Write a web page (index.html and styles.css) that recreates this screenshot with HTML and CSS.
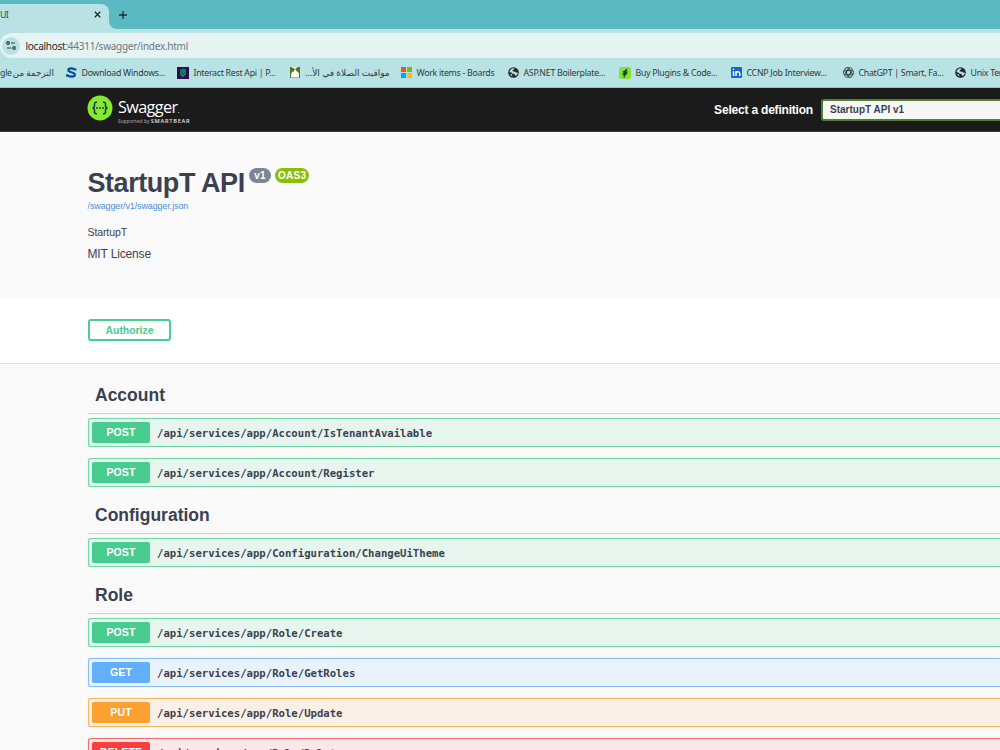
FILE: index.html
```html
<!DOCTYPE html>
<html lang="en">
<head>
    <meta charset="utf-8">
    <title>Swagger UI</title>
    <link rel="stylesheet" href="styles.css">
</head>
<body>
    <!-- browser -->
    <div class="tab-strip">
        <div class="tab"><span>UI</span>
            <svg class="tab-close" width="7" height="7" viewBox="0 0 7 7"><path d="M.8.8l5.4 5.4M6.2.8L.8 6.2"/></svg>
        </div>
        <svg class="tab-foot" width="8" height="8" viewBox="0 0 8 8"><path d="M0 0v8h8A8 8 0 0 1 0 0z"/></svg>
        <svg class="new-tab" width="8" height="8" viewBox="0 0 8 8"><path d="M4 0v8M0 4h8"/></svg>
    </div>
    <div class="toolbar">
        <div class="address">
            <span class="site-info">
                <svg width="10" height="9" viewBox="0 0 10 9"><circle cx="2" cy="2" r="1.3"/><path d="M5 2h4M1 7h4"/><circle cx="8" cy="7" r="1.3"/></svg>
            </span>
            <span class="url"><b>localhost</b>:44311/swagger/index.html</span>
        </div>
    </div>
    <div class="bookmarks">
        <div class="bookmark cut"><span>gle</span><span class="arabic" dir="rtl">الترجمة من</span></div>
        <div class="bookmark">
            <svg width="11" height="11" viewBox="0 0 11 11"><path d="M9.300 3.600V1.500M8.800 2.600C7.500 1 2.300.8 2.300 3.200c0 2.500 6.600 1.700 6.600 4.500C8.900 10.200 3 10 1.500 8.200M1.200 7.300v2.500" fill="none" stroke="#08489f" stroke-width="2.200"/></svg>
            <span>Download Windows...</span>
        </div>
        <div class="bookmark">
            <svg width="12" height="12" viewBox="0 0 12 12"><path fill="#2b0d4e" d="M0 0h12v12H0z"/><path fill="#168067" d="M3 3l3-1.500 3 1v5L5.500 10.500 4.500 9 3 8z"/><path stroke="#2b0d4e" stroke-width=".4" d="M5 3v4l3-1" fill="none"/></svg>
            <span>Interact Rest Api | P...</span>
        </div>
        <div class="bookmark prayer">
            <svg width="10" height="11" viewBox="0 0 10 11"><path fill="#55751b" d="M0 0h10v11H0z"/><path fill="#fff" d="M1 10.500V7L2.500 4.500 3.500 5C3.500 4 5 3.500 5.200 1 5.500 3.500 7 4 7 5l.8-.5L9 7v3.500z"/><path fill="#e6f3ef" d="M1 0h7L5 2z"/></svg>
            <span class="arabic" dir="rtl">مواقيت الصلاة في الأ...</span>
        </div>
        <div class="bookmark">
            <svg width="11" height="11" viewBox="0 0 11 11"><path fill="#f25022" d="M0 0h5v5H0z"/><path fill="#7fba00" d="M6 0h5v5H6z"/><path fill="#00a4ef" d="M0 6h5v5H0z"/><path fill="#ffb900" d="M6 6h5v5H6z"/></svg>
            <span>Work items - Boards</span>
        </div>
        <div class="bookmark">
            <svg width="11" height="11" viewBox="0 0 11 11"><circle cx="5.500" cy="5.500" r="5.300" fill="#202426"/><path fill="#b8e2e4" d="M4 1.500l2.500-.2-.5 1.200-1.500.8.5 1.200 2.500.2.500 1 2-.2C9.800 7 9 8 8 8.800L7 8.500 6.500 7 4 6.500 3.500 5.500l-2-.3C1.600 3.700 2.700 2.200 4 1.500zM2 7l2 .5.500 1.700C3.200 9 2.400 8.200 2 7z"/></svg>
            <span>ASP.NET Boilerplate...</span>
        </div>
        <div class="bookmark">
            <svg width="12" height="12" viewBox="0 0 12 12"><rect width="12" height="12" rx="2" fill="#83e33d"/><path fill="#1d4514" d="M8.500 1.200L3.300 5l1.500.2L2.800 7.200l1.800-.1-1.100 1.600 1.500-.2-.5 2.200 1.500-.4.2-1.800 2.600-2-1.300.1 1.600-2-1.600.1z"/></svg>
            <span>Buy Plugins &amp; Code...</span>
        </div>
        <div class="bookmark">
            <svg width="11" height="11" viewBox="0 0 11 11"><rect width="11" height="11" rx="1" fill="#1768c5"/><path stroke="#fff" stroke-width="1.500" fill="none" d="M2.500 4.200V9M2.500 1.700v1.300M5 9V4.200M5 6c.5-1.800 3.700-1.800 3.700.3V9"/></svg>
            <span>CCNP Job Interview...</span>
        </div>
        <div class="bookmark">
            <svg width="11" height="11" viewBox="0 0 22 22"><g fill="none" stroke="#3b4a4e" stroke-width="2"><g id="petals"><path id="petal" d="M11 6l4 2.400v7.200l-5 4.500C6 22 2 18 3 14"/><use href="#petal" transform="rotate(60 11 11)"/><use href="#petal" transform="rotate(120 11 11)"/></g><use href="#petals" transform="rotate(180 11 11)"/></g></svg>
            <span>ChatGPT | Smart, Fa...</span>
        </div>
        <div class="bookmark last">
            <svg width="11" height="11" viewBox="0 0 11 11"><circle cx="5.500" cy="5.500" r="5.300" fill="#202426"/><path fill="#b8e2e4" d="M4 1.500l2.500-.2-.5 1.200-1.500.8.5 1.200 2.500.2.500 1 2-.2C9.800 7 9 8 8 8.800L7 8.500 6.500 7 4 6.500 3.500 5.500l-2-.3C1.600 3.700 2.700 2.200 4 1.500zM2 7l2 .5.500 1.700C3.200 9 2.400 8.200 2 7z"/></svg>
            <span>Unix Ter</span>
        </div>
    </div>

    <!-- swagger -->
    <div class="topbar">
        <div class="logo">
            <svg width="26" height="26" viewBox="0 0 26 26"><circle cx="13" cy="13" r="12.500" fill="#85ea2d"/><g fill="none" stroke="#173647" stroke-width="1.500"><path d="M10 7.200H9c-1.300 0-1.500.8-1.500 1.800v1.800c0 1.200-.6 2-2 2.100 1.400.1 2 .9 2 2.100v1.800c0 1.200.3 1.900 1.500 1.900h1M16 7.200h1c1.300 0 1.500.8 1.500 1.800v1.800c0 1.200.6 2 2 2.100-1.400.1-2 .9-2 2.100v1.800c0 1.200-.3 1.900-1.500 1.900h-1"/></g><g fill="#173647"><circle cx="10" cy="13" r=".9"/><circle cx="13" cy="13" r=".9"/><circle cx="16" cy="13" r=".9"/></g></svg>
            <div class="logo-text">
                <div class="logo-name">Swagger<small>.</small></div>
                <div class="logo-by">Supported by <b>SMARTBEAR</b></div>
            </div>
        </div>
        <div class="definition">
            <label>Select a definition</label>
            <div class="select">StartupT API v1</div>
        </div>
    </div>

    <div class="info">
        <h2 class="title">StartupT API<span class="version">v1</span><span class="version oas">OAS3</span></h2>
        <a class="json-link">/swagger/v1/swagger.json</a>
        <p class="description">StartupT</p>
        <p class="license">MIT License</p>
    </div>

    <div class="schemes"><button class="authorize">Authorize</button></div>

    <div class="operations">
        <h3 class="tag">Account</h3>
        <div class="opblock post"><span class="method">POST</span><span class="path">/api/services/app/Account/IsTenantAvailable</span></div>
        <div class="opblock post"><span class="method">POST</span><span class="path">/api/services/app/Account/Register</span></div>
        <h3 class="tag">Configuration</h3>
        <div class="opblock post"><span class="method">POST</span><span class="path">/api/services/app/Configuration/ChangeUiTheme</span></div>
        <h3 class="tag">Role</h3>
        <div class="opblock post"><span class="method">POST</span><span class="path">/api/services/app/Role/Create</span></div>
        <div class="opblock get"><span class="method">GET</span><span class="path">/api/services/app/Role/GetRoles</span></div>
        <div class="opblock put"><span class="method">PUT</span><span class="path">/api/services/app/Role/Update</span></div>
        <div class="opblock delete"><span class="method">DELETE</span><span class="path">/api/services/app/Role/Delete</span></div>
    </div>
</body>
</html>
```
FILE: styles.css
```css
* {
    box-sizing: border-box;
}

body {
    margin: 0;
    height: 750px;
    overflow: hidden;
    background: #fafafa;
    color: #3b4151;
    font-family: "Liberation Sans", Arial, sans-serif;
}

/* browser */
.tab-strip {
    display: flex;
    align-items: flex-end;
    height: 29px;
    background: #5bb9c2;
    font: 9px "Noto Sans", sans-serif;
}

.tab {
    display: flex;
    align-items: center;
    justify-content: space-between;
    width: 109px;
    height: 25px;
    padding: 0 8px 4px 0;
    border-radius: 0 8px 0 0;
    background: #b8e2e4;
    color: #3a5055;
    letter-spacing: -0.8px;
}

.tab-close,
.new-tab {
    fill: none;
    stroke: #1c2b2e;
    stroke-width: 1.3;
}

.tab-foot {
    fill: #b8e2e4;
}

.new-tab {
    margin: 0 0 10px 2px;
}

.toolbar {
    height: 29px;
    padding-top: 4px;
    background: #b8e2e4;
}

.address {
    display: flex;
    align-items: center;
    height: 25px;
    border-radius: 12px 0 0 12px;
    background: #e6f3f3;
}

.site-info {
    display: flex;
    align-items: center;
    justify-content: center;
    width: 18px;
    height: 18px;
    margin: 0 5.500px 0 2px;
    border-radius: 50%;
    background: #b8e2e4;
    fill: none;
    stroke: #2c4145;
    stroke-width: 1.2;
}

.url {
    color: #6d7779;
    font: 10px "Noto Sans", sans-serif;
    letter-spacing: -0.26px;
}

.url b {
    color: #1e2a2c;
    font-weight: 400;
}

.bookmarks {
    display: grid;
    grid-template-columns: 66px 111px 113px 111px 107px 111px 112px 112px 112px 45px;
    align-items: center;
    height: 30px;
    border-bottom: 1px solid #8fc3c8;
    background: #b8e2e4;
    color: #2c3c40;
    font: 8.8px "Noto Sans", sans-serif;
    letter-spacing: -0.28px;
    white-space: nowrap;
}

.bookmark {
    display: flex;
    align-items: center;
    gap: 4.500px;
}

.bookmark svg {
    flex: none;
}

.cut {
    gap: 1px;
}

.arabic {
    font-family: "Noto Sans", "DejaVu Sans", sans-serif;
    font-size: 9px;
    letter-spacing: 0;
}

.cut .arabic {
    font-size: 8.700px;
}

.prayer {
    gap: 5px;
}

.last {
    overflow: hidden;
}

/* swagger */
.topbar {
    display: flex;
    justify-content: space-between;
    height: 44px;
    padding-left: 87px;
    border-bottom: 1px solid #3a3a3a;
    background: #1b1b1b;
    color: #fff;
}

.logo {
    display: flex;
    gap: 5px;
    padding-top: 6.500px;
}

.logo-name {
    height: 22.500px;
    font: 16.200px/25px "Open Sans", sans-serif;
    letter-spacing: -0.6px;
}

.logo-name small {
    font-size: 8px;
}

.logo-by {
    color: #b5b5b5;
    font: 5px/8px "Open Sans", sans-serif;
    white-space: nowrap;
}

.logo-by b {
    color: #e4e4e4;
    font-size: 5.6px;
    font-weight: 600;
    letter-spacing: 0.75px;
}

.definition {
    display: flex;
    align-items: center;
    font-size: 12px;
    font-weight: 700;
    letter-spacing: -0.2px;
}

.select {
    width: 179px;
    height: 22px;
    margin-left: 8px;
    padding-left: 7px;
    border: 2px solid #547f37;
    border-right: 0;
    border-radius: 3px 0 0 3px;
    background: #f7f7f7;
    color: #3b4151;
    font-size: 10px;
    letter-spacing: 0;
    line-height: 18px;
}

.info {
    height: 165px;
    padding: 35px 0 0 87.500px;
}

.title {
    display: flex;
    height: 33px;
    margin: 0;
    font-size: 27px;
    letter-spacing: -0.44px;
    line-height: 32px;
}

.version {
    height: 15px;
    margin: 1px 0 0 4px;
    padding: 0 5.500px;
    border-radius: 8px;
    background: #7d8492;
    color: #fff;
    font-size: 10px;
    letter-spacing: 0.3px;
    line-height: 15px;
}

.oas {
    padding: 0 2.500px;
    background: #89bf04;
}

.json-link {
    display: block;
    color: #4990e2;
    font-size: 9px;
    letter-spacing: -0.12px;
    line-height: 12px;
}

.description,
.license {
    margin: 13px 0 0;
    font-size: 10.500px;
    letter-spacing: -0.1px;
    line-height: 14px;
}

.license {
    margin-top: 8px;
    font-size: 12px;
    letter-spacing: -0.15px;
}

.schemes {
    height: 67px;
    padding: 22px 0 0 88px;
    border-bottom: 1px solid #dedede;
    background: #fff;
}

.authorize {
    display: block;
    width: 83px;
    height: 22px;
    padding: 0;
    border: 2px solid #49cc90;
    border-radius: 3px;
    background: #fff;
    color: #49cc90;
    font: bold 10.500px "Liberation Sans", Arial, sans-serif;
    letter-spacing: -0.05px;
}

.operations {
    padding: 14px 0 0 88px;
}

.tag {
    height: 36px;
    margin: 0 0 4px;
    padding-left: 7px;
    border-bottom: 1px solid #d0d1d4;
    font-size: 17.500px;
    line-height: 35px;
}

.opblock {
    display: flex;
    align-items: center;
    height: 29px;
    margin-bottom: 11px;
    padding-left: 3px;
    border: 1px solid;
    border-right: 0;
    border-radius: 3px 0 0 3px;
    box-shadow: 0 0 2px rgba(0, 0, 0, .1);
}

.method {
    width: 58px;
    border-radius: 2px;
    color: #fff;
    font-size: 10.500px;
    font-weight: 700;
    letter-spacing: 0.1px;
    line-height: 21px;
    text-align: center;
}

.path {
    margin-left: 7px;
    padding-top: 1px;
    font: bold 10.640px "DejaVu Sans Mono", monospace;
}

.post {
    border-color: #6fd6a8;
    background: #e6f5ee;
}

.post .method {
    background: #49cc90;
}

.get {
    border-color: #82bffb;
    background: #e9f2fb;
}

.get .method {
    background: #61affe;
}

.put {
    border-color: #fab561;
    background: #faf0e6;
}

.put .method {
    background: #fca130;
}

.delete {
    border-color: #f86c6c;
    background: #fae7e7;
}

.delete .method {
    background: #f93e3e;
}
```
